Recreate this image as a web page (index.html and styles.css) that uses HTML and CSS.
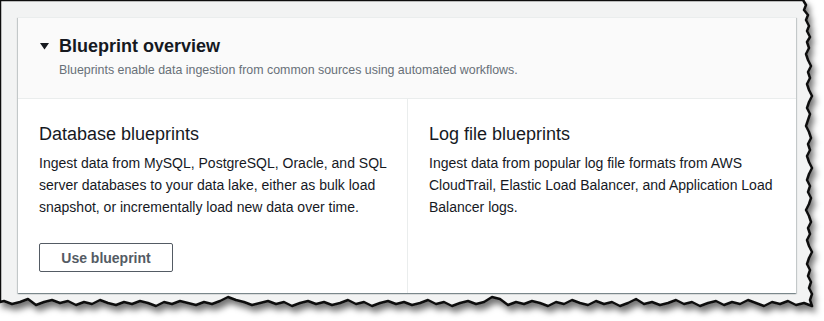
FILE: index.html
```html
<!DOCTYPE html>
<html lang="en">
<head>
    <meta charset="UTF-8">
    <meta name="viewport" content="width=device-width, initial-scale=1.0">
    <title>Blueprint overview</title>
    <link rel="stylesheet" href="styles.css">
</head>
<body>

<div class="frame">
    <!-- torn paper edge behind the card -->
    <svg class="torn" width="824" height="321" viewBox="0 0 824 321">
        <defs>
            <filter id="tornShadow" x="-5%" y="-5%" width="115%" height="120%">
                <feDropShadow dx="3" dy="5" stdDeviation="3" flood-color="#000" flood-opacity="0.55"/>
            </filter>
        </defs>
        <path filter="url(#tornShadow)" fill="#f2f3f3" stroke="#111" stroke-width="2.5" stroke-linejoin="round"
              d="M0,0 L803,0 L806,5 L804,10 L808,15 L806,20 L809,26 L807,31 L810,37 L807,42 L809,48 L806,54 L808,60 L811,66 L808,72 L810,78 L807,84 L809,90 L812,96 L809,102 L807,108 L810,114 L808,120 L806,126 L809,132 L811,138 L808,144 L810,150 L807,156 L809,162 L812,168 L809,174 L807,180 L810,186 L808,192 L811,198 L809,204 L806,210 L809,216 L811,222 L808,228 L810,234 L807,240 L809,246 L812,252 L809,258 L807,264 L810,270 L808,276 L811,282 L809,288 L812,294 L810,300 L812,306
              L804,303 L796,305 L788,301 L780,304 L772,302 L764,306 L756,303 L748,300 L740,304 L732,302 L724,305 L716,301 L708,303 L700,306 L692,302 L684,304 L676,300 L668,303 L660,305 L652,302 L644,304 L636,299 L628,303 L620,306 L612,302 L604,304 L596,301 L588,305 L580,303 L572,300 L564,304 L556,302 L548,306 L540,303 L532,301 L524,304 L516,302 L508,305 L500,299 L492,297 L484,302 L476,304 L468,301 L460,303 L452,306 L444,302 L436,304 L428,300 L420,303 L412,305 L404,302 L396,304 L388,301 L380,303 L372,306 L364,302 L356,304 L348,300 L340,303 L332,305 L324,302 L316,304 L308,301 L300,303 L292,306 L284,302 L276,304 L268,301 L260,303 L252,305 L244,302 L236,300 L228,297 L220,301 L212,304 L204,302 L196,305 L188,303 L180,301 L172,304 L164,302 L156,306 L148,303 L140,301 L132,304 L124,302 L116,305 L108,303 L100,300 L92,304 L84,302 L76,305 L68,301 L60,303 L52,300 L44,302 L36,305 L28,299 L20,302 L12,304 L4,301 L0,302 Z"/>
    </svg>

    <div class="card">
        <div class="card-header">
            <svg class="caret" width="9" height="7" viewBox="0 0 9 7">
                <polygon points="0,0 9,0 4.5,6.5" fill="#16191f"/>
            </svg>
            <div>
                <h2 class="card-title">Blueprint overview</h2>
                <p class="card-desc">Blueprints enable data ingestion from common sources using automated workflows.</p>
            </div>
        </div>
        <div class="columns">
            <div class="column">
                <h3>Database blueprints</h3>
                <p>Ingest data from MySQL, PostgreSQL, Oracle, and SQL server databases to your data lake, either as bulk load snapshot, or incrementally load new data over time.</p>
                <button class="btn">Use blueprint</button>
            </div>
            <div class="column">
                <h3>Log file blueprints</h3>
                <p>Ingest data from popular log file formats from AWS CloudTrail, Elastic Load Balancer, and Application Load Balancer logs.</p>
            </div>
        </div>
    </div>
</div>

</body>
</html>
```

FILE: styles.css
```css
body {
    margin: 0;
    padding: 0;
    background-color: white;
    font-family: "Liberation Sans", Arial, sans-serif;
    color: #16191f;
}

.frame {
    position: relative;
    width: 824px;
    height: 321px;
    padding: 17px 28px 0 18px;
    box-sizing: border-box;
}

.torn {
    position: absolute;
    left: 0;
    top: 0;
}

.card {
    position: relative;
    width: 778px;
    background-color: white;
    border-top: 1px solid #eaeded;
    box-shadow: 0 1px 1px 0 rgba(0, 28, 36, 0.3), 1px 1px 1px 0 rgba(0, 28, 36, 0.15), -1px 1px 1px 0 rgba(0, 28, 36, 0.15);
}

.card-header {
    display: flex;
    align-items: flex-start;
    gap: 10px;
    padding: 17px 20px 20px 22px;
    background-color: #fafafa;
    border-bottom: 1px solid #eaeded;
}

.caret {
    margin-top: 8px;
    flex-shrink: 0;
}

.card-title {
    margin: 0;
    font-size: 18px;
    line-height: 22px;
    font-weight: 700;
}

.card-desc {
    margin: 5px 0 0;
    font-size: 12.4px;
    line-height: 16px;
    color: #687078;
}

.columns {
    display: grid;
    grid-template-columns: 1fr 1fr;
}

.column {
    padding: 24px 17px 21px 21px;
}

.column + .column {
    border-left: 1px solid #eaeded;
}

.column h3 {
    margin: 0;
    font-size: 18px;
    line-height: 22px;
    font-weight: 400;
}

.column p {
    margin: 7px 0 0;
    font-size: 14px;
    line-height: 22px;
}

.btn {
    margin-top: 25px;
    height: 29px;
    padding: 0 20px;
    width: 134px;
    background-color: white;
    border: 1px solid #545b64;
    border-radius: 2px;
    color: #545b64;
    font-family: inherit;
    font-size: 14px;
    font-weight: 700;
    cursor: pointer;
}
```
